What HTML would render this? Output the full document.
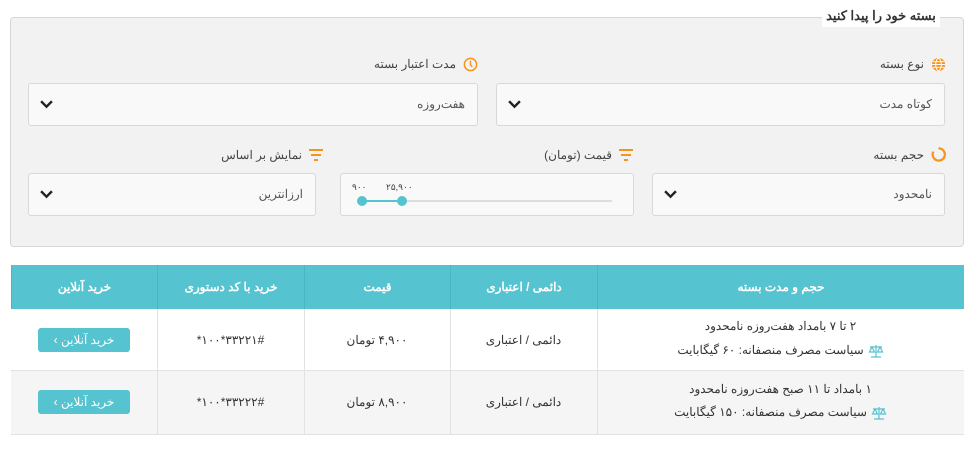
<!DOCTYPE html>
<html><head><meta charset="utf-8"><style>
*{box-sizing:border-box;margin:0;padding:0}
body{width:974px;height:449px;background:#fff;font-family:"Liberation Sans","Noto Sans CJK SC",sans-serif;position:relative;overflow:hidden;color:#333;direction:rtl}
.a{position:absolute}
.fs{left:10px;top:17px;width:954px;height:230px;background:#f2f2f2;border:1px solid #d6d6d6;border-radius:4px}
.lg{left:822px;top:7px;width:118px;height:20px;background:#fff;font-size:13px;font-weight:bold;text-align:center;line-height:18px;color:#333}
.lbl{font-size:12px;color:#444;height:16px;line-height:16px;white-space:nowrap}
.sel{background:#f9f9f9;border:1px solid #d8d8d8;border-radius:3px;font-size:12px;color:#555;line-height:40px;padding-right:12px}
.chev{position:absolute;left:11px;top:16px;width:13px;height:9px}
.tb{left:11px;top:265px;width:953px;height:170px;border:1px solid #e2e2e2}
.hd{top:0;height:44px;background:#55c4d0;color:#fff;font-weight:bold;font-size:12px;text-align:center;line-height:44px;border-left:1px solid #4bb5c1}
.c{font-size:12px;text-align:center;color:#333}
.btn{background:#55c4d0;color:#fff;font-size:12px;border-radius:3px;width:92px;height:24px;line-height:24px;text-align:center}
.sc{display:inline-block;vertical-align:middle;margin-left:4px}
</style></head><body>
<div class="a fs"></div>
<div class="a lg">بسته خود را پیدا کنید</div>

<svg class="a" style="left:931px;top:57px" width="15" height="15" viewBox="0 0 16 16"><circle cx="8" cy="8" r="7" fill="#f7941d"/><g fill="none" stroke="#fff" stroke-width="1"><ellipse cx="8" cy="8" rx="3" ry="6.5"/><line x1="1" y1="8" x2="15" y2="8"/><line x1="2" y1="5" x2="14" y2="5"/><line x1="2" y1="11" x2="14" y2="11"/></g></svg>
<div class="a lbl" style="right:50px;top:56px">نوع بسته</div>
<div class="a sel" style="left:496px;top:83px;width:449px;height:43px">کوتاه مدت<svg class="chev" viewBox="0 0 12 8"><path d="M1 1l5 5 5-5" fill="none" stroke="#222" stroke-width="2.2"/></svg></div>

<svg class="a" style="left:463px;top:57px" width="15" height="15" viewBox="0 0 16 16"><circle cx="8" cy="8" r="6.5" fill="none" stroke="#f7941d" stroke-width="1.6"/><path d="M8 4v4.5l2 2" fill="none" stroke="#f7941d" stroke-width="1.5"/></svg>
<div class="a lbl" style="right:518px;top:56px">مدت اعتبار بسته</div>
<div class="a sel" style="left:28px;top:83px;width:450px;height:43px">هفت‌روزه<svg class="chev" viewBox="0 0 12 8"><path d="M1 1l5 5 5-5" fill="none" stroke="#222" stroke-width="2.2"/></svg></div>

<svg class="a" style="left:931px;top:147px" width="15" height="15" viewBox="0 0 16 16"><path d="M8 1.5A6.5 6.5 0 1 1 2.5 5" fill="none" stroke="#f7941d" stroke-width="2.4"/></svg>
<div class="a lbl" style="right:50px;top:147px">حجم بسته</div>
<div class="a sel" style="left:652px;top:173px;width:293px;height:43px">نامحدود<svg class="chev" viewBox="0 0 12 8"><path d="M1 1l5 5 5-5" fill="none" stroke="#222" stroke-width="2.2"/></svg></div>

<svg class="a" style="left:618px;top:148px" width="16" height="14" viewBox="0 0 16 14"><g fill="#f7941d"><rect x="1" y="1" width="14" height="2"/><rect x="3" y="6" width="10" height="2"/><rect x="6" y="11" width="4" height="2"/></g></svg>
<div class="a lbl" style="right:362px;top:147px">قیمت (تومان)</div>
<div class="a sel" style="left:340px;top:173px;width:294px;height:43px;padding:0"></div>
<div class="a" style="left:352px;top:182px;font-size:9px;color:#444">۹۰۰</div>
<div class="a" style="left:386px;top:182px;font-size:9px;color:#444">۲۵,۹۰۰</div>
<div class="a" style="left:362px;top:200px;width:250px;height:2px;background:#ddd"></div>
<div class="a" style="left:362px;top:200px;width:40px;height:2px;background:#55c4d0"></div>
<div class="a" style="left:357px;top:196px;width:10px;height:10px;border-radius:50%;background:#55c4d0"></div>
<div class="a" style="left:397px;top:196px;width:10px;height:10px;border-radius:50%;background:#55c4d0"></div>

<svg class="a" style="left:308px;top:148px" width="16" height="14" viewBox="0 0 16 14"><g fill="#f7941d"><rect x="1" y="1" width="14" height="2"/><rect x="3" y="6" width="10" height="2"/><rect x="6" y="11" width="4" height="2"/></g></svg>
<div class="a lbl" style="right:672px;top:147px">نمایش بر اساس</div>
<div class="a sel" style="left:28px;top:173px;width:288px;height:43px">ارزانترین<svg class="chev" viewBox="0 0 12 8"><path d="M1 1l5 5 5-5" fill="none" stroke="#222" stroke-width="2.2"/></svg></div>

<div class="a tb"></div>
<div class="a" style="left:11px;top:309px;width:953px;height:62px;background:#fff;border-bottom:1px solid #e2e2e2"></div>
<div class="a" style="left:11px;top:371px;width:953px;height:63px;background:#f5f5f5"></div>
<div class="a hd" style="left:597px;width:367px;top:265px">حجم و مدت بسته</div>
<div class="a hd" style="left:450px;width:147px;top:265px">دائمی / اعتباری</div>
<div class="a hd" style="left:304px;width:146px;top:265px">قیمت</div>
<div class="a hd" style="left:157px;width:147px;top:265px">خرید با کد دستوری</div>
<div class="a hd" style="left:11px;width:146px;top:265px">خرید آنلاین</div>
<div class="a" style="left:157px;top:309px;width:1px;height:125px;background:#e2e2e2"></div>
<div class="a" style="left:304px;top:309px;width:1px;height:125px;background:#e2e2e2"></div>
<div class="a" style="left:450px;top:309px;width:1px;height:125px;background:#e2e2e2"></div>
<div class="a" style="left:597px;top:309px;width:1px;height:125px;background:#e2e2e2"></div>

<div class="a c" style="left:597px;width:367px;top:319px">۲ تا ۷ بامداد هفت‌روزه نامحدود</div>
<div class="a c" style="left:597px;width:367px;top:343px"><svg class="sc" width="16" height="16" viewBox="0 0 16 16"><g fill="none" stroke="#55c4d0" stroke-width="1.2"><path d="M8 2v12M3 14h10M2 4h12M4 4l-2.5 5h5zM12 4l-2.5 5h5z"/></g></svg>سیاست مصرف منصفانه: ۶۰ گیگابایت</div>
<div class="a c" style="left:450px;width:147px;top:333px">دائمی / اعتباری</div>
<div class="a c" style="left:304px;width:146px;top:333px">۴,۹۰۰ تومان</div>
<div class="a c" style="left:157px;width:147px;top:333px;direction:ltr">*۱۰۰*۳۳۲۲۱#</div>
<div class="a btn" style="left:38px;top:328px">خرید آنلاین ›</div>

<div class="a c" style="left:597px;width:367px;top:382px">۱ بامداد تا ۱۱ صبح هفت‌روزه نامحدود</div>
<div class="a c" style="left:597px;width:367px;top:405px"><svg class="sc" width="16" height="16" viewBox="0 0 16 16"><g fill="none" stroke="#55c4d0" stroke-width="1.2"><path d="M8 2v12M3 14h10M2 4h12M4 4l-2.5 5h5zM12 4l-2.5 5h5z"/></g></svg>سیاست مصرف منصفانه: ۱۵۰ گیگابایت</div>
<div class="a c" style="left:450px;width:147px;top:395px">دائمی / اعتباری</div>
<div class="a c" style="left:304px;width:146px;top:395px">۸,۹۰۰ تومان</div>
<div class="a c" style="left:157px;width:147px;top:395px;direction:ltr">*۱۰۰*۳۳۲۲۲#</div>
<div class="a btn" style="left:38px;top:390px">خرید آنلاین ›</div>
</body></html>
